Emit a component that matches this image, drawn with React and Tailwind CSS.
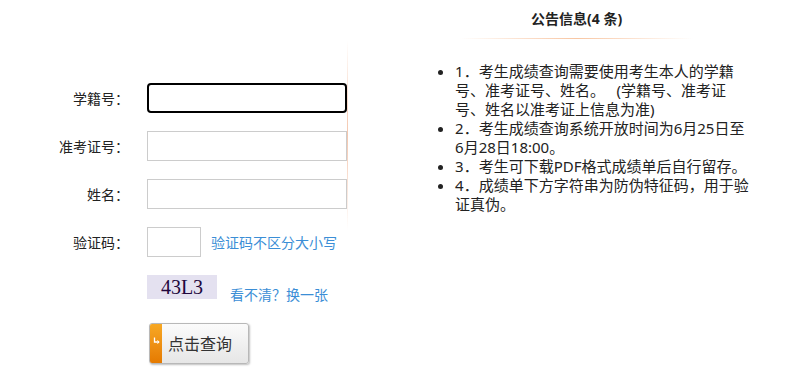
import React from 'react';

const notices = [
  '1．考生成绩查询需要使用考生本人的学籍号、准考证号、姓名。\u3000 (学籍号、准考证号、姓名以准考证上信息为准)',
  '2．考生成绩查询系统开放时间为6月25日至6月28日18:00。',
  '3．考生可下载PDF格式成绩单后自行留存。',
  '4．成绩单下方字符串为防伪特征码，用于验证真伪。',
];

const Field = ({ label, focused }) => (
  <div className="flex items-center h-[30px]">
    <label className="w-[129px] text-right text-[14px] text-[#222]">{label}</label>
    <input
      className={
        focused
          ? 'ml-[18px] w-[200px] h-[30px] border-2 border-black rounded-[4px] outline-none bg-white'
          : 'ml-[18px] w-[200px] h-[30px] border border-[#ccc] outline-none bg-white'
      }
    />
  </div>
);

export default function App() {
  return (
    <div
      className="flex w-[805px] h-[378px] bg-white"
      style={{ fontFamily: '"Noto Sans", "Noto Sans CJK SC", sans-serif' }}
    >
      {/* left: query form */}
      <div className="w-[351px] flex flex-col gap-[18px] pt-[83px]">
        <Field label="学籍号：" focused />
        <Field label="准考证号：" />
        <Field label="姓名：" />
        <div className="flex items-center h-[30px]">
          <label className="w-[129px] text-right text-[14px] text-[#222]">验证码：</label>
          <input className="ml-[18px] w-[54px] h-[30px] border border-[#ccc] outline-none bg-white" />
          <a className="ml-[10px] text-[14px] text-[#3b8ed6]">验证码不区分大小写</a>
        </div>
        <div className="flex items-start h-[30px] pl-[147px]">
          <div className="w-[70px] h-[24px] bg-[#e4e1f0] flex items-center justify-center">
            <span
              className="text-[20px] leading-none text-[#22073d]"
              style={{ fontFamily: '"Liberation Serif", serif' }}
            >
              43L3
            </span>
          </div>
          <a className="ml-[13px] mt-[10px] text-[14px] leading-[20px] text-[#3b8ed6]">看不清？换一张</a>
        </div>
        <div className="pl-[149px]">
          <button className="flex w-[100px] h-[41px] rounded-[3px] border border-[#b8b8b8] overflow-hidden shadow-[1px_1px_2px_rgba(0,0,0,0.25)] bg-gradient-to-b from-[#fbfbfb] to-[#e6e6e6]">
            <span className="w-[12px] h-full bg-gradient-to-b from-[#f7a823] to-[#e57a00] flex justify-center pt-[13px]">
              <svg width="7" height="8" viewBox="0 0 7 8">
                <path d="M1.5 0.5 V5 H6" stroke="#fff" strokeWidth="1.3" fill="none" />
                <path d="M4.5 3.3 L6.2 5 L4.5 6.7" stroke="#fff" strokeWidth="1" fill="none" />
              </svg>
            </span>
            <span className="flex-1 flex items-center pl-[6px] text-[16px] text-[#333]">点击查询</span>
          </button>
        </div>
      </div>

      {/* divider */}
      <div className="w-px h-[190px] mt-[40px] bg-gradient-to-b from-transparent via-[#f4c6ad] to-transparent" />

      {/* right: notices */}
      <div className="w-[462px] flex flex-col items-center">
        <h3 className="mt-[10px] text-[14px] font-bold leading-[18px] text-[#222]">公告信息(4 条)</h3>
        <div className="mt-[10px] w-[233px] h-px bg-gradient-to-r from-transparent via-[#f8c6a3] to-transparent" />
        <ul className="self-start list-disc ml-[107px] mt-[23px] w-[297px] text-[15px] leading-[19px] text-[#222]">
          {notices.map((n) => (
            <li key={n}>{n}</li>
          ))}
        </ul>
      </div>
    </div>
  );
}
